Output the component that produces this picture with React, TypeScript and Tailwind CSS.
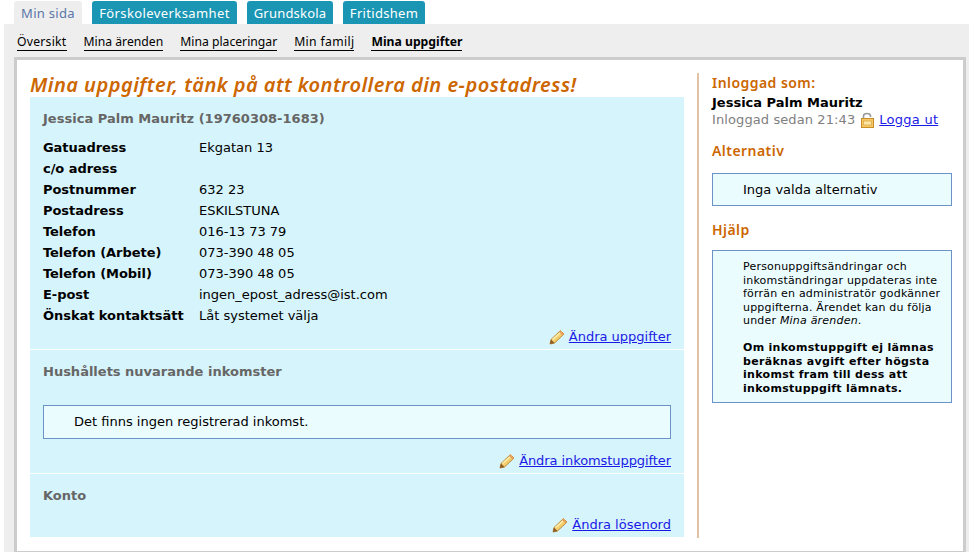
import React from "react";

const verdana = "font-['DejaVu_Sans',Verdana,sans-serif]";

function Pencil() {
  return (
    <svg width="16" height="16" viewBox="0 0 16 16" className="shrink-0">
      <path d="M1 15 L2 10.5 L11.5 1.5 L15 5 L5.5 14 Z" fill="#f5cf6e" stroke="#b8883a" strokeWidth="1" />
      <path d="M3.5 10.5 L12.5 2.5" stroke="#fdf0b0" strokeWidth="1.5" />
      <path d="M1 15 L2 10.5 L5.5 14 Z" fill="#8a5a2a" />
      <path d="M11.5 1.5 L15 5 L13.5 6.5 L10 3 Z" fill="#e9a25c" />
    </svg>
  );
}

function Lock() {
  return (
    <svg width="15" height="16" viewBox="0 0 15 16" className="shrink-0">
      <path d="M3.5 7 V4 C3.5 0.6 10.5 0.6 10.5 4 V5" fill="none" stroke="#9a9a9a" strokeWidth="1.6" />
      <rect x="1.5" y="6.5" width="12" height="9" fill="#f7c964" stroke="#c98d28" />
      <rect x="3.5" y="9" width="8" height="4" fill="#fbe6a8" stroke="#d9a441" strokeWidth="0.7" />
    </svg>
  );
}

const rows: [string, string][] = [
  ["Gatuadress", "Ekgatan 13"],
  ["c/o adress", ""],
  ["Postnummer", "632 23"],
  ["Postadress", "ESKILSTUNA"],
  ["Telefon", "016-13 73 79"],
  ["Telefon (Arbete)", "073-390 48 05"],
  ["Telefon (Mobil)", "073-390 48 05"],
  ["E-post", "ingen_epost_adress@ist.com"],
  ["Önskat kontaktsätt", "Låt systemet välja"],
];

function EditLink({ label, className }: { label: string; className?: string }) {
  return (
    <div className="flex justify-end items-center gap-[4px] h-[21px] pr-[13px]">
      <Pencil />
      <a className={`text-[#1a1ae6] underline text-[13px] leading-[21px] cursor-pointer ${className ?? ""}`}>{label}</a>
    </div>
  );
}

function SubLink({ label, bold, className }: { label: string; bold?: boolean; className: string }) {
  return (
    <a className={`text-black text-[12.2px] leading-[16px] border-b border-black whitespace-nowrap ${bold ? "font-bold" : ""} ${className} font-['Noto_Sans',sans-serif]`}>
      {label}
    </a>
  );
}

const heading = "font-['Noto_Sans',sans-serif] font-semibold text-[14px] leading-[20px] text-[#cc6600] tracking-[0.45px]";

export default function App() {
  return (
    <div className={`${verdana} w-[969px] h-[552px] overflow-hidden bg-white text-[13px] text-black`}>
      <div className="flex h-[24px] pl-[14px] pt-px gap-[10px]">
        <div className="w-[68px] h-[23px] bg-[#eeeeee] rounded-t-[3px] text-[#5a78a8] text-[13px] leading-[25px] text-center tracking-[0.3px] font-['Noto_Sans',sans-serif]">Min sida</div>
        <div className="w-[145px] h-[23px] bg-[#1a96b4] rounded-t-[3px] text-white text-[13px] leading-[25px] text-center font-['Noto_Sans',sans-serif] tracking-[0.4px]">Förskoleverksamhet</div>
        <div className="w-[86px] h-[23px] bg-[#1a96b4] rounded-t-[3px] text-white text-[13px] leading-[25px] text-center font-['Noto_Sans',sans-serif] tracking-[0.2px]">Grundskola</div>
        <div className="w-[82px] h-[23px] bg-[#1a96b4] rounded-t-[3px] text-white text-[13px] leading-[25px] text-center font-['Noto_Sans',sans-serif] tracking-[0.3px]">Fritidshem</div>
      </div>
      <div className="ml-[4px] h-[528px] bg-[#eeeeee] pl-[10px] pr-[3px]">
        <div className="flex h-[33px] pl-[3px] pt-[10px] items-start gap-[17px]">
          <SubLink label="Översikt" className="tracking-[0.25px]" />
          <SubLink label="Mina ärenden" className="" />
          <SubLink label="Mina placeringar" className="" />
          <SubLink label="Min familj" className="tracking-[0.35px]" />
          <SubLink label="Mina uppgifter" bold className="" />
        </div>
        <div className="h-[497px] bg-white border-[3px] border-[#cccccc] pl-[13px] pt-[13px] flex">
          <div className="w-[654px] shrink-0">
            <h1 className="font-['Noto_Sans',sans-serif] italic font-semibold text-[20px] leading-[24px] text-[#cc6600] tracking-[0.47px] whitespace-nowrap">
              Mina uppgifter, tänk på att kontrollera din e-postadress!
            </h1>
            <div className="bg-[#d6f4fb]">
              <section className="h-[253px] pl-[13px] pt-[13px] border-b border-white">
                <h2 className="text-[13px] font-bold text-[#666666] leading-[17px] mb-[10px] tracking-[0.02px]">Jessica Palm Mauritz (19760308-1683)</h2>
                {rows.map(([k, v]) => (
                  <div key={k} className="flex h-[21px] leading-[21px] text-[13px]">
                    <span className="w-[156px] font-bold shrink-0 whitespace-nowrap tracking-[-0.05px]">{k}</span>
                    <span>{v}</span>
                  </div>
                ))}
                <EditLink label="Ändra uppgifter" />
              </section>
              <section className="h-[124px] pt-[13px] border-b border-white">
                <h2 className="pl-[13px] text-[13px] font-bold text-[#666666] leading-[17px] mb-[25px]">Hushållets nuvarande inkomster</h2>
                <div className="mx-[13px] h-[34px] border border-[#6b93c8] bg-[#ebfcff] pl-[30px] leading-[32px]">Det finns ingen registrerad inkomst.</div>
                <div className="mt-[11px]"><EditLink label="Ändra inkomstuppgifter" className="tracking-[-0.08px]" /></div>
              </section>
              <section className="h-[63px] pt-[13px]">
                <h2 className="pl-[13px] text-[13px] font-bold text-[#666666] leading-[17px] mb-[10px]">Konto</h2>
                <EditLink label="Ändra lösenord" />
              </section>
            </div>
          </div>
          <aside className="ml-[13px] w-[266px] h-[465px] border-l-2 border-[#e2c3a3] pl-[13px]">
            <h3 className={heading}>Inloggad som:</h3>
            <div className="font-bold text-[13px] leading-[16px] mt-[2px]">Jessica Palm Mauritz</div>
            <div className="flex items-center h-[17px] text-[13px] text-[#808080] tracking-[0.1px]">
              Inloggad sedan 21:43
              <span className="ml-[5px] mr-[4px]"><Lock /></span>
              <a className="text-[#1a1ae6] underline tracking-[0.25px]">Logga ut</a>
            </div>
            <h3 className={`mt-[13px] ${heading}`}>Alternativ</h3>
            <div className="mt-[12px] w-[240px] h-[33px] border border-[#6b93c8] bg-[#ebfcff] pl-[30px] leading-[31px]">Inga valda alternativ</div>
            <h3 className={`mt-[14px] ${heading}`}>Hjälp</h3>
            <div className="mt-[10px] w-[240px] h-[153px] border border-[#6b93c8] bg-[#ebfcff] pl-[30px] pr-[6px] pt-[9px] text-[11px] leading-[13.5px] tracking-[0.2px]">
              <p>Personuppgiftsändringar och inkomständringar uppdateras inte förrän en administratör godkänner uppgifterna. Ärendet kan du följa under <i>Mina ärenden</i>.</p>
              <p className="mt-[13.5px] font-bold tracking-[0.3px]">Om inkomstuppgift ej lämnas beräknas avgift efter högsta inkomst fram till dess att inkomstuppgift lämnats.</p>
            </div>
          </aside>
        </div>
      </div>
    </div>
  );
}
